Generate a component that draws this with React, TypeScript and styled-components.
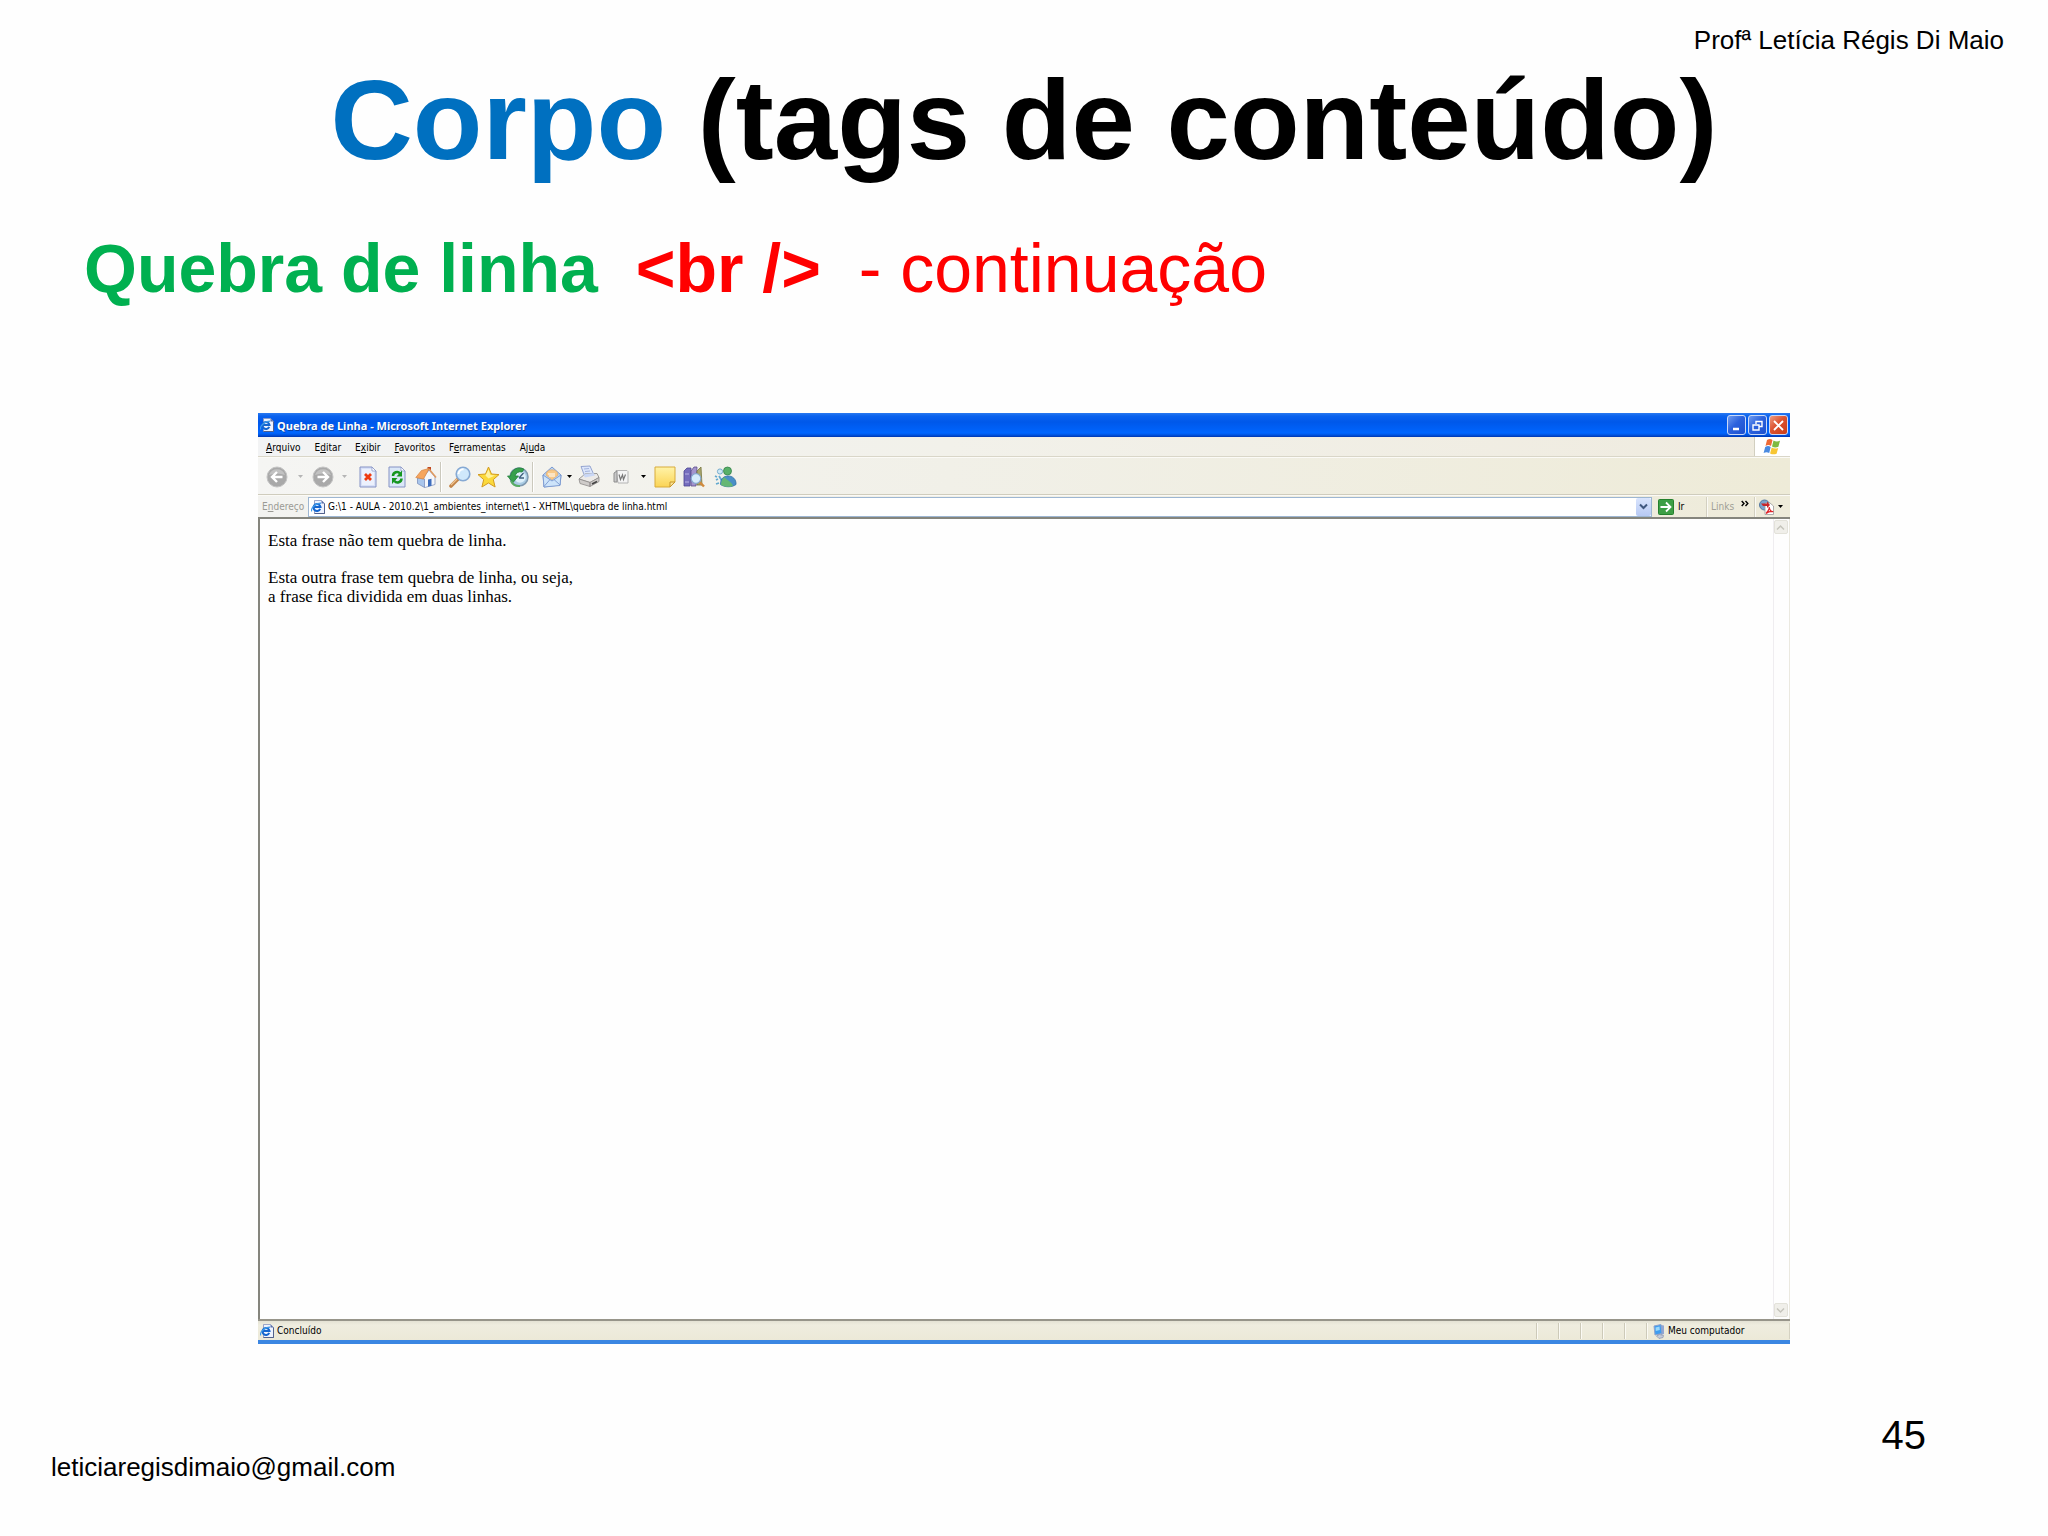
import React from "react";
import styled, { createGlobalStyle } from "styled-components";

const UI_FONT = `"DejaVu Sans Condensed", "Noto Sans", sans-serif`;

const GlobalStyle = createGlobalStyle`
  *, *::before, *::after { box-sizing: border-box; }
  body {
    margin: 0;
    background: #fefefe;
    color: #000;
    font-family: "Liberation Sans", Arial, sans-serif;
  }
  button, input { font: inherit; color: inherit; }
  svg { display: block; flex: none; }
`;

/* ---------- slide ---------- */

const Slide = styled.main`
  display: flex;
  flex-direction: column;
  min-height: 100vh;
`;

const Author = styled.p`
  margin: 0;
  padding: 25px 44px 0;
  font-size: 26px;
  line-height: 30px;
  text-align: right;
`;

const Title = styled.h1`
  margin: 0;
  font-size: 114px;
  line-height: 130px;
  text-align: center;
`;

const TitleAccent = styled.span`
  color: #0070c0;
`;

const Subtitle = styled.h2`
  margin: 44px 84px 106px;
  font-size: 68px;
  line-height: 78px;
  font-weight: 400;
  color: #ff0000;
  white-space: pre-wrap;
`;

const Topic = styled.strong`
  color: #00b050;
`;

const SlideFooter = styled.footer`
  display: flex;
  justify-content: space-between;
  padding: 68px 122px 54px 51px;
`;

const Email = styled.a`
  align-self: flex-end;
  margin-top: 40px;
  font-size: 26px;
  line-height: 30px;
  color: inherit;
  text-decoration: none;
`;

const PageNumber = styled.span`
  font-size: 40px;
  line-height: 46px;
`;

/* ---------- browser window ---------- */

const Browser = styled.section`
  flex: 1;
  display: flex;
  flex-direction: column;
  margin: 0 12.6%;
  border-bottom: 4px solid #3b86e2;
  font-family: ${UI_FONT};
  font-size: 10px;
  line-height: 14px;
`;

const TitleBar = styled.header`
  display: flex;
  align-items: center;
  gap: 3px;
  height: 24px;
  padding: 0 2px;
  background: linear-gradient(#2a7af0 0, #0b62ee 3px, #0058ea 9px, #005ff5 15px, #0066ff 20px, #0054e0 22px, #0036b0 24px);
  color: #fff;
`;

const WindowTitle = styled.h3`
  flex: 1;
  margin: 0;
  padding-top: 1px;
  font-family: "Noto Sans", "Open Sans", sans-serif;
  font-size: 11px;
  line-height: 14px;
  font-weight: 700;
  text-shadow: 1px 1px 0 #0b3ea0;
`;

const Captions = styled.div`
  display: flex;
  gap: 2px;
`;

const CaptionButton = styled.button<{ $close?: boolean }>`
  display: grid;
  place-items: center;
  width: 19px;
  height: 20px;
  padding: 0;
  border: 1px solid #c9d9f8;
  border-radius: 3px;
  background: ${(p) =>
    p.$close
      ? "linear-gradient(135deg, #ee9c80, #dc5330 45%, #c93c18)"
      : "linear-gradient(135deg, #6f9cf0, #2c62dd 45%, #1c50cf)"};
`;

const MenuRow = styled.div`
  display: flex;
  justify-content: space-between;
  height: 20px;
  background: linear-gradient(90deg, #f2f3f4, #f2f1ea 45%, #efebdf);
  border-bottom: 1px solid #d9d6c8;
`;

const Menu = styled.nav`
  display: flex;
  align-items: center;
  gap: 14px;
  padding: 2px 0 0 8px;
`;

const MenuButton = styled.button`
  padding: 0;
  border: 0;
  background: none;
`;

const Flag = styled.div`
  display: grid;
  place-items: center;
  width: 36px;
  background: #fff;
  border-left: 1px solid #d2cfc0;
`;

const Toolbar = styled.div`
  display: flex;
  align-items: center;
  height: 38px;
  padding: 1px 0 0 7px;
  background: linear-gradient(90deg, #f5f5f3, #f1f0e8 45%, #eeebd8);
  border-top: 1px solid #fbfaf6;
  border-bottom: 1px solid #cfccbd;
`;

const ToolButton = styled.button<{ $w: number }>`
  display: grid;
  place-items: center;
  width: ${(p) => p.$w}px;
  height: 28px;
  padding: 0;
  border: 0;
  background: none;
`;

const Divider = styled.span`
  width: 5px;
  height: 30px;
  border-left: 1px solid #cbc9bd;
  box-shadow: inset 1px 0 0 #fff;
`;

const AddressRow = styled.div`
  display: flex;
  align-items: center;
  height: 22px;
  padding-left: 4px;
  background: linear-gradient(90deg, #f3f3f0, #f0efe6 45%, #eeebda);
  border-top: 1px solid #fbfaf6;
`;

const AddressLabel = styled.label`
  width: 46px;
  color: #9a9a94;
`;

const AddressBox = styled.div`
  flex: 1;
  display: flex;
  align-items: center;
  height: 20px;
  padding-left: 2px;
  background: #fff;
  border: 1px solid #9db6d2;
`;

const AddressInput = styled.input`
  flex: 1;
  min-width: 0;
  height: 18px;
  padding: 0 0 0 3px;
  border: 0;
  outline: 0;
  background: none;
  line-height: 18px;
`;

const OpenList = styled.button`
  display: grid;
  place-items: center;
  width: 15px;
  height: 18px;
  padding: 0;
  border: 0;
  border-radius: 2px;
  background: linear-gradient(#d9e4fd, #b7c9f4);
`;

const GoButton = styled.button`
  display: flex;
  align-items: center;
  gap: 4px;
  width: 54px;
  padding: 0 0 0 6px;
  border: 0;
  background: none;
`;

const RowGroup = styled.div`
  display: flex;
  align-items: center;
  gap: 7px;
  width: 48px;
  height: 20px;
  padding-left: 4px;
  border-left: 1px solid #d3d0c1;
  box-shadow: inset 1px 0 0 #fbfaf5;
  color: #a09f96;
`;

const PdfGroup = styled(RowGroup)`
  gap: 4px;
  width: 36px;
`;

const Viewport = styled.div`
  flex: 1;
  display: flex;
  border: 2px solid #85857d;
  border-width: 2px 0 0 2px;
  background: #fefefe;
`;

const Document = styled.article`
  flex: 1;
  padding: 12px 8px;
  font-family: "Liberation Serif", "Times New Roman", serif;
  font-size: 17px;
  line-height: 19px;
`;

const Paragraph = styled.p`
  margin: 0 0 18px;
`;

const ScrollBar = styled.div`
  display: flex;
  flex-direction: column;
  justify-content: space-between;
  width: 17px;
  padding: 1px 2px 2px 0;
  border-left: 1px solid #efedf0;
  border-right: 1px solid #ebe9e0;
`;

const ScrollButton = styled.button`
  display: grid;
  place-items: center;
  width: 14px;
  height: 14px;
  padding: 0;
  border: 1px solid #e3e2da;
  border-radius: 2px;
  background: #f0efea;
`;

const StatusBar = styled.footer`
  display: flex;
  align-items: center;
  height: 21px;
  padding: 1px 0 0 2px;
  background: linear-gradient(#e4e2d4, #efeddf 4px, #ece9d8);
  border-top: 2px solid #97958a;
`;

const StatusText = styled.span`
  flex: 1;
  padding-left: 3px;
`;

const StatusCell = styled.span`
  width: 22px;
  height: 16px;
  border-left: 1px solid #cdcab9;
  box-shadow: inset 1px 0 0 #fbfaf4;
`;

const Zone = styled(StatusCell)`
  display: flex;
  align-items: center;
  gap: 3px;
  width: 144px;
  padding-left: 6px;
  border-right: 1px solid #d5d2c2;
`;

/* ---------- drawings ---------- */

const PageIcon = ({ size }: { size: number }) => (
  <svg width={size} height={size} viewBox="0 0 16 16">
    <path d="M4 .5h8l3.500 3.500v11.500H4z" fill="#eef3ff" stroke="#8a97c0" />
    <path d="M12 .5v3.500h3.500z" fill="#5a6ea8" />
    <path d="M15.500 4v11.500H4" fill="none" stroke="#42527f" />
    <path d="M10.500 10.200A4 4 0 1 1 10.800 8H3.500" fill="none" stroke="#1566cf" strokeWidth="2.400" />
    <path d="M1 13C-1 10 5 3.500 11.500 3.500" fill="none" stroke="#3f9ae8" strokeWidth="1.300" />
  </svg>
);

const DownArrow = ({ color = "#000" }: { color?: string }) => (
  <svg width="5" height="3" viewBox="0 0 5 3">
    <path d="M0 0h5L2.500 3z" fill={color} />
  </svg>
);

const NavIcon = ({ forward }: { forward?: boolean }) => (
  <svg width="22" height="22" viewBox="0 0 22 22">
    <circle cx="11" cy="11" r="10" fill="#a9a9a9" stroke="#c4c4c4" />
    <path d="M3 9a8.500 8.500 0 0 1 16 0q-8-3-16 0z" fill="#c2c2c2" />
    <path
      d={forward ? "M5.500 11h10M11 6l5 5-5 5" : "M16.500 11h-10M11 6l-5 5 5 5"}
      fill="none"
      stroke="#fff"
      strokeWidth="2.4"
    />
  </svg>
);

const StopIcon = () => (
  <svg width="18" height="22" viewBox="0 0 18 22">
    <path d="M1 1h12l4 4v16H1z" fill="#d8e1f8" stroke="#8592c4" />
    <path d="M3 3h9l3 3v13H3z" fill="#ecf1fd" />
    <path d="M13 1v4h4z" fill="#fff" stroke="#8592c4" strokeWidth=".7" />
    <path d="M6 8l6 6M12 8l-6 6" stroke="#ee3b10" strokeWidth="2.800" />
  </svg>
);

const RefreshIcon = () => (
  <svg width="18" height="22" viewBox="0 0 18 22">
    <path d="M1 1h12l4 4v16H1z" fill="#dbe8f8" stroke="#8592c4" />
    <path d="M13 1v4h4z" fill="#fff" stroke="#8592c4" strokeWidth=".7" />
    <path d="M5 10c0-4 5-5 7-2.500" fill="none" stroke="#15961f" strokeWidth="2.500" />
    <path d="M14 4.500v6H8.500z" fill="#15961f" />
    <path d="M13.500 12.500c0 4-5 5-7 2.500" fill="none" stroke="#15961f" strokeWidth="2.500" />
    <path d="M4 18v-6h5.500z" fill="#15961f" />
  </svg>
);

const HomeIcon = () => (
  <svg width="22" height="22" viewBox="0 0 22 22">
    <path d="M12.500 1h3.500v6h-3.500z" fill="#c0481f" />
    <path d="M8 12l6-8 6 7v7.500L10 21.500 8 20z" fill="#f5f7fb" stroke="#8697bf" strokeWidth=".8" />
    <path d="M2.500 12L9.500 13v8.500l-7-4z" fill="#a9c6ec" stroke="#7c91bd" strokeWidth=".8" />
    <path d="M.8 11.500L6.500 4.500 14 2.500 8.500 13z" fill="#f6a55d" stroke="#d98a4a" strokeWidth=".8" />
    <path d="M14 3l7 8.500" stroke="#e09a60" strokeWidth="1.600" />
    <path d="M13 13.500l3.500-.8v7l-3.500 1z" fill="#3e6ebd" />
  </svg>
);

const SearchIcon = () => (
  <svg width="22" height="22" viewBox="0 0 22 22">
    <path d="M2 20l7-7" stroke="#c28448" strokeWidth="3.600" strokeLinecap="round" />
    <path d="M2 19l6-6" stroke="#f0c491" strokeWidth="1.200" />
    <circle cx="14" cy="8" r="6.800" fill="#cfe8fb" stroke="#86a9d3" strokeWidth="1.600" />
    <path d="M9.500 8a4.500 4.500 0 0 1 5-4.500" fill="none" stroke="#fff" strokeWidth="1.800" />
  </svg>
);

const StarIcon = () => (
  <svg width="23" height="22" viewBox="0 0 23 22">
    <path
      d="M11.500 1l3 7 7.500.6-5.700 5 1.800 7.400-6.600-4-6.600 4 1.800-7.400L1 8.600 8.500 8z"
      fill="#fbd93b"
      stroke="#d39c20"
      strokeLinejoin="round"
    />
    <path d="M11.500 3.500l2 5.500 4.500.6-6.500 3-3-3z" fill="#fff2a0" />
  </svg>
);

const HistoryIcon = () => (
  <svg width="22" height="22" viewBox="0 0 22 22">
    <circle cx="12" cy="11" r="9" fill="#a9cbe4" stroke="#7f99b0" strokeWidth="1.500" />
    <circle cx="13" cy="11" r="5.800" fill="#def0fb" />
    <path d="M12 12l4.500-5M12 12h5" stroke="#40607f" strokeWidth="1.300" />
    <path d="M17 3.200A9 9 0 0 0 3.500 10H.5L6 16.500 11.500 10H8a5.500 5.500 0 0 1 7-4z" fill="#36a04c" stroke="#22803a" strokeWidth=".8" />
    <path d="M4 15a9 9 0 0 0 9 5" fill="none" stroke="#58ad66" strokeWidth="2" />
  </svg>
);

const MailIcon = () => (
  <svg width="20" height="22" viewBox="0 0 20 22">
    <path d="M1 9l9-8 9 8-1 10-16 2z" fill="#b9d6f6" stroke="#7b99cf" />
    <path d="M4 9c0-7 12-7 12 0l-6 5z" fill="#f9c987" stroke="#d7a570" strokeWidth=".6" />
    <path d="M6 8h7M7 10h6" stroke="#fff" strokeWidth="1" />
    <path d="M1 9l9 6 9-6-1 10.500-16 1.500z" fill="#cde4fa" stroke="#7b99cf" strokeWidth=".9" />
    <path d="M2 20.500l6-7M18 19l-6-5.500" stroke="#7b99cf" strokeWidth=".9" />
  </svg>
);

const PrintIcon = () => (
  <svg width="22" height="23" viewBox="0 0 22 23">
    <path d="M3 1.500L12 1l4 9-9 2z" fill="#dce6fb" stroke="#8c9dcc" strokeWidth=".9" />
    <path d="M6 4l5-.5M7 6.500l5-.5" stroke="#a3b3dd" />
    <path d="M1 14l6-5 12-.5 2 4-9 5z" fill="#eceae8" stroke="#8f8d8b" strokeWidth=".9" />
    <path d="M5 9.500l2 3 10-2-1.500-2.500" fill="#c9d7f6" />
    <path d="M1 14l11 3.500v4L2 18.500zM12 17.500l9-5v4l-9 5z" fill="#cfccca" stroke="#8f8c8a" strokeWidth=".8" />
    <path d="M14 19l5-2.500" stroke="#444" strokeWidth="1.600" />
  </svg>
);

const WordIcon = () => (
  <svg width="16" height="16" viewBox="0 0 16 16">
    <path d="M3 1.500h11l1 1V14H5z" fill="#f4f4f4" stroke="#b4b4b4" />
    <path d="M1 4l3-2v11H1z" fill="#c8c8c8" stroke="#8e8e8e" />
    <path d="M6 5.500l1.500 5L9.500 6l1 4.500 2-5" fill="none" stroke="#777" strokeWidth="1.200" />
  </svg>
);

const NoteIcon = () => (
  <svg width="22" height="22" viewBox="0 0 22 22">
    <defs>
      <linearGradient id="note" x2="0" y2="1">
        <stop offset="0" stopColor="#fff3a8" />
        <stop offset="1" stopColor="#fbd455" />
      </linearGradient>
    </defs>
    <path d="M1 1h20v15l-5 5H1z" fill="url(#note)" stroke="#d8ab3a" />
    <path d="M21 16h-5v5z" fill="#f9e294" stroke="#c7962a" />
  </svg>
);

const BooksIcon = () => (
  <svg width="22" height="22" viewBox="0 0 22 22">
    <path d="M1 5l3-3h4L7 20H1z" fill="#756dbd" stroke="#4c4593" strokeWidth=".8" />
    <path d="M2 8h4M2 16h4" stroke="#b9b3e6" />
    <path d="M8 5l3-4h3l-1 19H8z" fill="#a394cd" stroke="#5c4d8c" strokeWidth=".8" />
    <path d="M14 5l4-4 1 18h-5z" fill="#a9a76d" stroke="#77753f" strokeWidth=".8" />
    <path d="M16.500 16l4.500 4.500" stroke="#d28a3d" strokeWidth="2.400" />
    <circle cx="13" cy="12.500" r="4.800" fill="#d6ecfc" stroke="#86a8cf" strokeWidth="1.200" />
  </svg>
);

const MessengerIcon = () => (
  <svg width="23" height="22" viewBox="0 0 23 22">
    <circle cx="6" cy="5.500" r="2.600" fill="#cfe8f5" stroke="#6da6c9" strokeWidth=".9" />
    <path d="M1 10l2 1M2 14l2-1M2 18l3-1M5 10l3 5" stroke="#63a9cf" strokeWidth="1.800" />
    <circle cx="13.500" cy="5" r="4" fill="#58b068" stroke="#35834a" strokeWidth=".8" />
    <path d="M6.500 18.500c0-7 4-8 7-8.500 5-.5 9 3.500 8.500 8.500-4 3-11 3-15.500 0z" fill="#4a8fc7" stroke="#2f6ea6" strokeWidth=".8" />
    <path d="M10 11c4 4 8 5 9 9-4 1.500-8 1-12-1 0-3 1-6 3-8z" fill="#65b774" />
  </svg>
);

const FlagIcon = () => (
  <svg width="18" height="17" viewBox="0 0 18 17">
    <path d="M4 2q3-2 5.500 0L8 8Q5.500 6 2.500 8z" fill="#ee6a35" />
    <path d="M10.500 2.500q3 1.800 6.500.3l-1.600 6Q12 10.200 9 8.500z" fill="#7fba41" />
    <path d="M2.200 9q3-1.800 5.500 0l-1.500 6Q3.500 13.300.6 15z" fill="#4a8ae0" />
    <path d="M8.700 9.600q3 1.800 6.500.4l-1.600 5.700q-3.400 1.300-6.500-.3z" fill="#f7c634" />
  </svg>
);

const GoIcon = () => (
  <svg width="16" height="16" viewBox="0 0 16 16">
    <rect x=".5" y=".5" width="15" height="15" rx="1" fill="#3d9e45" stroke="#24802e" />
    <path d="M2.500 8h10M8 3.500L12.500 8 8 12.500" fill="none" stroke="#fff" strokeWidth="1.800" />
  </svg>
);

const PdfIcon = () => (
  <svg width="15" height="16" viewBox="0 0 15 16">
    <circle cx="5.500" cy="6" r="5" fill="#7ba3cc" stroke="#5578a0" />
    <path d="M6 4h5l3.500 3v8.500H6z" fill="#fff" stroke="#999" strokeWidth=".8" />
    <path d="M2 4.500h6V2.500l3 3.500-3 3V7H4z" fill="#c8262a" />
    <path d="M7 14.500c2-2 3.500-4 3.200-6.500.4 3 2 5 4 4.500-2-.4-5 .3-7.200 2z" fill="none" stroke="#e0262a" strokeWidth="1.200" />
  </svg>
);

const ComputerIcon = () => (
  <svg width="12" height="15" viewBox="0 0 12 15">
    <path d="M8 1l3 .5v8.500L8 11z" fill="#93a6d2" />
    <path d="M1 2l7-1.500 1 9L2 11z" fill="#3f9df0" stroke="#8fa3cc" />
    <path d="M2.500 3.500l4-1 .3 3.500-4 1z" fill="#9ad8fb" />
    <path d="M3.500 12l3-1.500 4 1-.5 2-4 1z" fill="#c4cbdb" stroke="#8691ab" strokeWidth=".7" />
  </svg>
);

const Chevron = ({ up, color, w }: { up?: boolean; color: string; w: number }) => (
  <svg width="9" height="7" viewBox="0 0 9 7">
    <path d={up ? "M1 5.500L4.500 2 8 5.500" : "M1 1.500L4.500 5 8 1.500"} fill="none" stroke={color} strokeWidth={w} />
  </svg>
);

const MoreIcon = () => (
  <svg width="8" height="14" viewBox="0 0 8 14">
    <path d="M.7 1L3 3.500.7 6M4.500 1L6.800 3.500 4.500 6" fill="none" stroke="#000" strokeWidth="1.400" />
  </svg>
);

/* ---------- content ---------- */

const menus = [
  ["", "A", "rquivo"],
  ["E", "d", "itar"],
  ["E", "x", "ibir"],
  ["", "F", "avoritos"],
  ["F", "e", "rramentas"],
  ["Aj", "u", "da"],
];

type Tool = { name: string; w: number; icon: React.ReactNode } | null;

const tools: Tool[] = [
  { name: "Voltar", w: 24, icon: <NavIcon /> },
  { name: "Histórico de voltar", w: 22, icon: <DownArrow color="#b5b5b5" /> },
  { name: "Avançar", w: 24, icon: <NavIcon forward /> },
  { name: "Histórico de avançar", w: 18, icon: <DownArrow color="#b5b5b5" /> },
  { name: "Parar", w: 29, icon: <StopIcon /> },
  { name: "Atualizar", w: 29, icon: <RefreshIcon /> },
  { name: "Página inicial", w: 29, icon: <HomeIcon /> },
  null,
  { name: "Pesquisar", w: 29, icon: <SearchIcon /> },
  { name: "Favoritos", w: 29, icon: <StarIcon /> },
  { name: "Histórico", w: 29, icon: <HistoryIcon /> },
  null,
  { name: "Correio", w: 29, icon: <MailIcon /> },
  { name: "Opções de correio", w: 6, icon: <DownArrow /> },
  { name: "Imprimir", w: 34, icon: <PrintIcon /> },
  { name: "Editar com Word", w: 30, icon: <WordIcon /> },
  { name: "Opções de edição", w: 14, icon: <DownArrow /> },
  { name: "Discutir", w: 29, icon: <NoteIcon /> },
  { name: "Referências", w: 29, icon: <BooksIcon /> },
  { name: "Messenger", w: 34, icon: <MessengerIcon /> },
];

export default function App() {
  return (
    <>
      <GlobalStyle />
      <Slide>
        <Author>Profª Letícia Régis Di Maio</Author>
        <Title>
          <TitleAccent>Corpo</TitleAccent> (tags de conteúdo)
        </Title>
        <Subtitle>
          <Topic>Quebra de linha</Topic>
          {"  "}
          <strong>{"<br />"}</strong>
          {"  - continuação"}
        </Subtitle>

        <Browser>
          <TitleBar>
            <PageIcon size={14} />
            <WindowTitle>Quebra de Linha - Microsoft Internet Explorer</WindowTitle>
            <Captions>
              <CaptionButton aria-label="Minimizar">
                <svg width="13" height="13" viewBox="0 0 13 13">
                  <path d="M3 10h6" stroke="#fff" strokeWidth="2.500" />
                </svg>
              </CaptionButton>
              <CaptionButton aria-label="Restaurar">
                <svg width="13" height="13" viewBox="0 0 13 13">
                  <path d="M5 5V2.500h6v5H8.500M2 6h6v5H2z" fill="none" stroke="#fff" strokeWidth="1.400" />
                </svg>
              </CaptionButton>
              <CaptionButton aria-label="Fechar" $close>
                <svg width="13" height="13" viewBox="0 0 13 13">
                  <path d="M2 2l9 9M11 2l-9 9" stroke="#fff" strokeWidth="1.900" />
                </svg>
              </CaptionButton>
            </Captions>
          </TitleBar>

          <MenuRow>
            <Menu>
              {menus.map(([before, key, after]) => (
                <MenuButton key={before + key + after}>
                  {before}
                  <u>{key}</u>
                  {after}
                </MenuButton>
              ))}
            </Menu>
            <Flag>
              <FlagIcon />
            </Flag>
          </MenuRow>

          <Toolbar>
            {tools.map((tool, i) =>
              tool ? (
                <ToolButton key={i} $w={tool.w} aria-label={tool.name}>
                  {tool.icon}
                </ToolButton>
              ) : (
                <Divider key={i} />
              )
            )}
          </Toolbar>

          <AddressRow>
            <AddressLabel htmlFor="address">
              E<u>n</u>dereço
            </AddressLabel>
            <AddressBox>
              <PageIcon size={14} />
              <AddressInput
                id="address"
                defaultValue={"G:\\1 - AULA - 2010.2\\1_ambientes_internet\\1 - XHTML\\quebra de linha.html"}
              />
              <OpenList aria-label="Endereços recentes">
                <Chevron color="#40587f" w={2} />
              </OpenList>
            </AddressBox>
            <GoButton>
              <GoIcon />
              Ir
            </GoButton>
            <RowGroup>
              Links
              <MoreIcon />
            </RowGroup>
            <PdfGroup>
              <PdfIcon />
              <DownArrow />
            </PdfGroup>
          </AddressRow>

          <Viewport>
            <Document>
              <Paragraph>Esta frase não tem quebra de linha.</Paragraph>
              <Paragraph>
                Esta outra frase tem quebra de linha, ou seja,
                <br />a frase fica dividida em duas linhas.
              </Paragraph>
            </Document>
            <ScrollBar>
              <ScrollButton aria-label="Rolar para cima">
                <Chevron up color="#c5c4bc" w={1.5} />
              </ScrollButton>
              <ScrollButton aria-label="Rolar para baixo">
                <Chevron color="#c5c4bc" w={1.5} />
              </ScrollButton>
            </ScrollBar>
          </Viewport>

          <StatusBar>
            <PageIcon size={14} />
            <StatusText>Concluído</StatusText>
            <StatusCell />
            <StatusCell />
            <StatusCell />
            <StatusCell />
            <StatusCell />
            <Zone>
              <ComputerIcon />
              Meu computador
            </Zone>
          </StatusBar>
        </Browser>

        <SlideFooter>
          <Email href="mailto:leticiaregisdimaio@gmail.com">leticiaregisdimaio@gmail.com</Email>
          <PageNumber>45</PageNumber>
        </SlideFooter>
      </Slide>
    </>
  );
}
